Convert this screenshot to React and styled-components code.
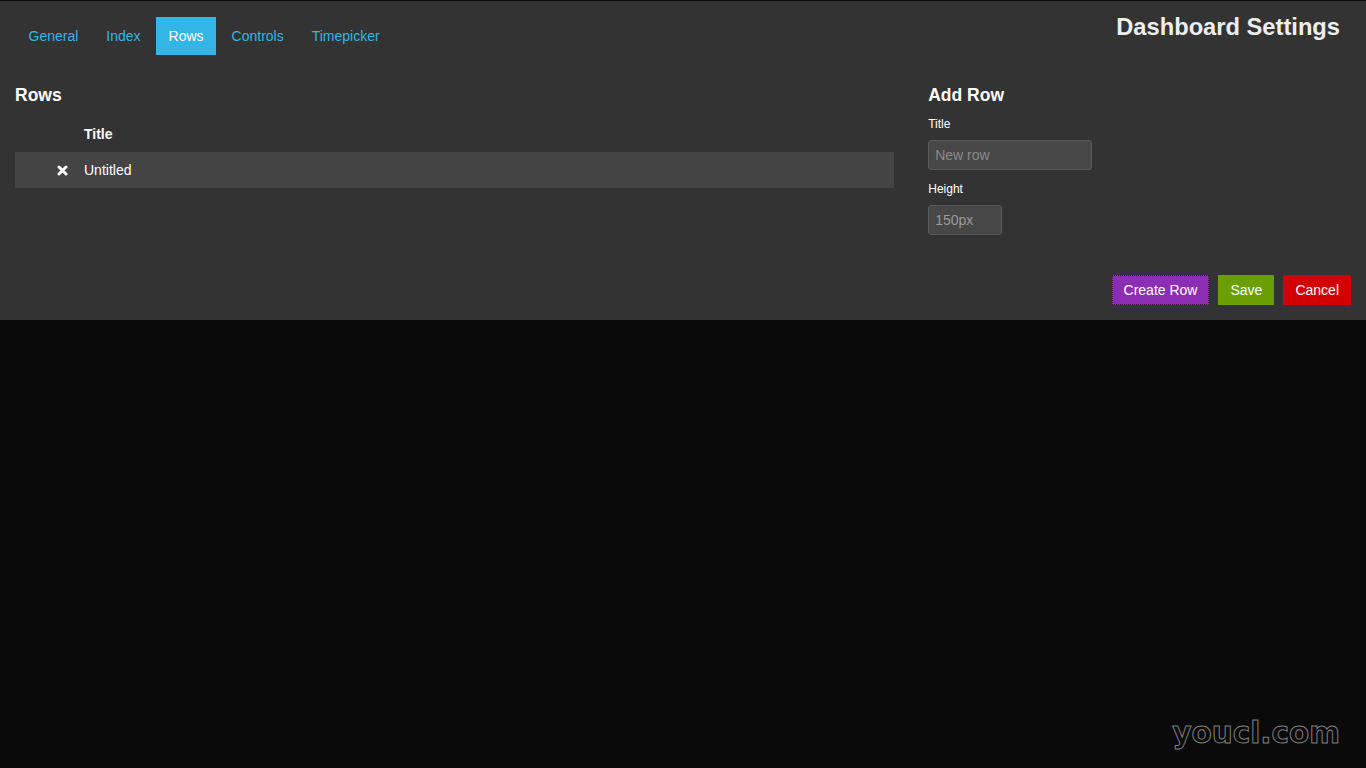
import React from "react";
import styled, { createGlobalStyle } from "styled-components";

const Global = createGlobalStyle`
  html, body { margin: 0; padding: 0; background: #0a0a0a; }
  body { font-family: "Liberation Sans", Arial, sans-serif; min-height: 768px; }
  #root { min-height: 768px; position: relative; }
  * { box-sizing: border-box; }
`;

const Panel = styled.div`
  margin-top: 1px;
  background: #333333;
  padding: 16px 15px 15px;
`;

const Header = styled.div`
  display: flex;
  justify-content: space-between;
  align-items: flex-start;
`;

const Nav = styled.ul`
  display: flex;
  gap: 3px;
  list-style: none;
  margin: 0;
  padding: 0 0 0 1px;
`;

const Tab = styled.li`
  height: 38px;
  display: flex;
  align-items: center;
  padding: 0 12.5px;
  font-size: 14px;
  color: ${(p) => (p.$active ? "#ffffff" : "#33b5e5")};
  background: ${(p) => (p.$active ? "#33b5e5" : "transparent")};
  cursor: pointer;
`;

const PageTitle = styled.h2`
  margin: -5px 11px 0 0;
  font-size: 23.7px;
  line-height: 30px;
  font-weight: bold;
  color: #eeeeee;
`;

const Columns = styled.div`
  display: grid;
  grid-template-columns: 65.81% 1fr;
  column-gap: 34px;
  margin-top: 30px;
`;

const Heading = styled.h3`
  margin: 0 0 11px;
  font-size: 17.5px;
  line-height: 20px;
  font-weight: bold;
  color: #ffffff;
`;

const Table = styled.div`
  display: flex;
  flex-direction: column;
`;

const TableRow = styled.div`
  display: grid;
  grid-template-columns: 69px 1fr;
  height: 36px;
  align-items: center;
  background: ${(p) => (p.$head ? "transparent" : "#444444")};
  color: #ffffff;
  font-size: 14px;
  font-weight: ${(p) => (p.$head ? "bold" : "normal")};
`;

const IconCell = styled.div`
  padding-left: 42px;
  display: flex;
  align-items: center;
`;

const Label = styled.label`
  display: block;
  font-size: 12px;
  line-height: 17px;
  color: #ffffff;
  margin-bottom: 7px;
`;

const Input = styled.input`
  display: block;
  width: ${(p) => p.$w}px;
  height: 30px;
  padding: 0 6px;
  margin: 0 0 11px;
  background: #474747;
  border: 1px solid #5a5a5a;
  border-radius: 3px;
  font-family: "Liberation Sans", Arial, sans-serif;
  font-size: 14px;
  color: #9a9a9a;
  outline: none;
  &::placeholder { color: #8a8a8a; }
`;

const Footer = styled.div`
  display: flex;
  justify-content: flex-end;
  gap: 9px;
  margin-top: 29px;
`;

const Button = styled.button`
  height: 30px;
  padding: 0 12px;
  border: none;
  border-radius: 0;
  font-family: "Liberation Sans", Arial, sans-serif;
  font-size: 14px;
  color: #ffffff;
  background: ${(p) => p.$bg};
  outline: ${(p) => (p.$focus ? "1px dotted #3a2244" : "none")};
  outline-offset: -1px;
  cursor: pointer;
`;

const Watermark = styled.div`
  position: absolute;
  top: 718px;
  right: 26px;
  font-family: "DejaVu Sans", sans-serif;
  font-weight: bold;
  font-size: 29.5px;
  line-height: 29.5px;
  color: transparent;
  -webkit-text-stroke: 1px #7e7e7e;
`;

const CloseIcon = () => (
  <svg width="11" height="11" viewBox="0 0 11 11">
    <path d="M2 2 L9 9 M9 2 L2 9" stroke="#ffffff" strokeWidth="3" strokeLinecap="round" />
  </svg>
);

export default function App() {
  const tabs = ["General", "Index", "Rows", "Controls", "Timepicker"];
  return (
    <>
      <Global />
      <Panel>
        <Header>
          <Nav>
            {tabs.map((t) => (
              <Tab key={t} $active={t === "Rows"}>{t}</Tab>
            ))}
          </Nav>
          <PageTitle>Dashboard Settings</PageTitle>
        </Header>
        <Columns>
          <div>
            <Heading>Rows</Heading>
            <Table>
              <TableRow $head>
                <div />
                <div>Title</div>
              </TableRow>
              <TableRow>
                <IconCell><CloseIcon /></IconCell>
                <div>Untitled</div>
              </TableRow>
            </Table>
          </div>
          <div>
            <Heading>Add Row</Heading>
            <Label>Title</Label>
            <Input $w={164} placeholder="New row" />
            <Label>Height</Label>
            <Input $w={74} defaultValue="150px" />
          </div>
        </Columns>
        <Footer>
          <Button $bg="#8c2db3" $focus>Create Row</Button>
          <Button $bg="#699f00">Save</Button>
          <Button $bg="#d20000">Cancel</Button>
        </Footer>
      </Panel>
      <Watermark>youcl.com</Watermark>
    </>
  );
}
